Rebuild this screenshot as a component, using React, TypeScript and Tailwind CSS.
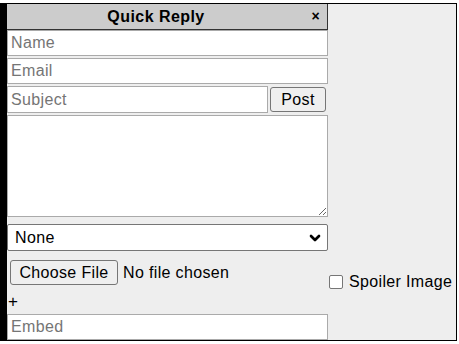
import { ChevronDown } from "lucide-react";

const font = { fontFamily: '"Liberation Sans", Arial, sans-serif' };

export default function App() {
  return (
    <div className="bg-white w-[459px] h-[344px] pt-[3px] tracking-[0.35px]" style={font}>
      <div className="flex w-[457px] h-[338px] border border-black border-l-[7px] bg-[#eeeeee] text-black">
        {/* form column */}
        <div className="flex flex-col w-[321px] shrink-0">
          <div className="relative h-[26px] bg-[#cccccc] border-r border-b border-[#333] flex items-center justify-center pr-[22px]">
            <span className="font-bold text-[16px] leading-none tracking-[0.45px]">Quick Reply</span>
            <span className="absolute right-[7px] top-[5px] font-bold text-[14px] leading-none">×</span>
          </div>
          <input
            placeholder="Name"
            className="h-[26px] w-[321px] border border-[#aaa] bg-white px-[3px] text-[16px] placeholder:text-[#757575] outline-none"
          />
          <input
            placeholder="Email"
            className="mt-[2px] h-[26px] w-[321px] border border-[#aaa] bg-white px-[3px] text-[16px] placeholder:text-[#757575] outline-none"
          />
          <div className="mt-[2px] flex items-center h-[27px]">
            <input
              placeholder="Subject"
              className="h-[27px] w-[261px] border border-[#aaa] bg-white px-[3px] text-[16px] placeholder:text-[#757575] outline-none"
            />
            <button className="ml-[2px] h-[25px] w-[56px] rounded-[3px] border border-[#767676] bg-[#efefef] text-[16px] leading-none">
              Post
            </button>
          </div>
          <textarea className="mt-[2px] h-[102px] w-[321px] border border-[#aaa] bg-white outline-none" />
          <div className="mt-[7px] h-[27px] w-[321px] flex items-center justify-between border border-[#767676] rounded-[2px] bg-white pl-[7px] pr-[4px] text-[16px]">
            <span>None</span>
            <ChevronDown size={16} strokeWidth={4} />
          </div>
          <div className="mt-[9px] flex items-center h-[25px] pl-[3px]">
            <button className="h-[25px] w-[108px] rounded-[3px] border border-[#767676] bg-[#efefef] text-[16px] leading-none">
              Choose File
            </button>
            <span className="ml-[5px] text-[16px]">No file chosen</span>
          </div>
          <div className="mt-[6px] h-[21px] pl-[1px] text-[17px] leading-[21px]">+</div>
          <input
            placeholder="Embed"
            className="mt-[2px] h-[26px] w-[321px] border border-[#aaa] bg-white px-[3px] text-[16px] placeholder:text-[#757575] outline-none"
          />
        </div>
        {/* spoiler column */}
        <div className="flex-1 flex flex-col">
          <div className="h-[266px]" />
          <label className="flex items-center gap-[6px] pl-[1px] text-[16px]">
            <span className="w-[14px] h-[14px] border border-[#767676] rounded-[2px] bg-white" />
            <span>Spoiler Image</span>
          </label>
        </div>
      </div>
    </div>
  );
}
